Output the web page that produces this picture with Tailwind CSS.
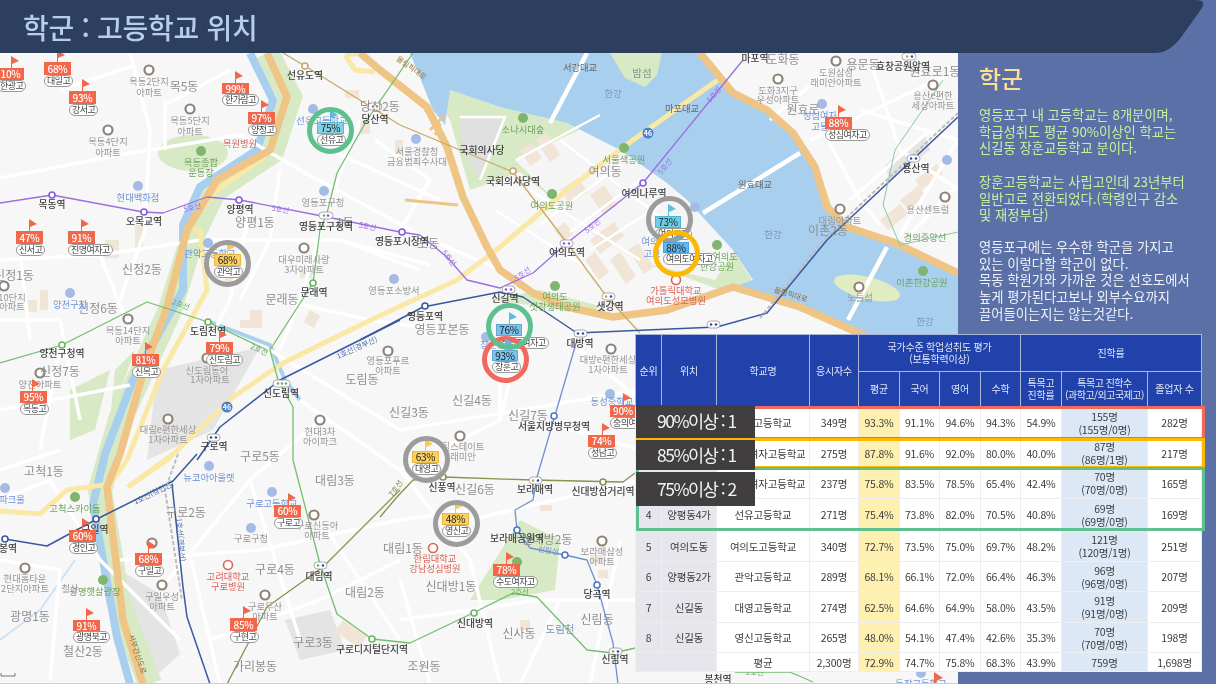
<!doctype html>
<html lang="ko">
<head>
<meta charset="utf-8">
<title>학군 : 고등학교 위치</title>
<script src="https://cdn.jsdelivr.net/npm/@tailwindcss/browser@4"></script>
</head>
<body class="m-0 overflow-hidden">
<div class="relative w-[1216px] h-[684px] overflow-hidden bg-[#5b70a6] font-['Noto_Sans_CJK_KR','Noto_Sans',sans-serif] blur-[0.35px]">

  <!-- title bar -->
  <header class="relative z-10 h-[53px] flex items-center pl-[23px]">
    <svg class="absolute left-0 top-0 w-[1216px] h-[53px]" viewBox="0 0 1216 53"><path d="M0 0H1195Q1207 0 1202 8L1182 36Q1170 53 1155 53H0Z" fill="#2d3f5f"/></svg>
    <h1 class="relative text-[28px] leading-[34px] font-medium tracking-[-0.3px] text-[#b7cde8] whitespace-nowrap">학군 : 고등학교 위치</h1>
  </header>

  <div class="flex h-[631px]">
    <!-- map -->
    <div class="relative w-[958px] h-[631px] shrink-0 overflow-hidden bg-[#f7f7f7]">
      <svg class="block w-[958px] h-[631px]" viewBox="0 53 958 631">
        <!-- land tones -->
        <g fill="#e4e4e4">
          <path d="M157 370L260 347L213 430L147 460Z"/>
          <path d="M115 567L160 594L180 654L147 684L130 640Z"/>
          <path d="M285 620L330 610L345 650L300 660Z"/>
          <path d="M885 165L925 135L930 150L890 180Z"/>
        </g>
        <g fill="#f1e5d8">
          <path d="M225 275h14v10h-14zM250 310h12v18h-12zM27 300h10v12h-10zM40 290h8v20h-8zM310 310l10 6-6 12-10-6zM300 270h12v8h-12zM240 320h16v8h-16zM135 225h8v22h-8zM105 240h14v18h-14zM345 90h14v8h-14zM360 120h10v14h-10zM395 140h8v14h-8zM520 620h10v10h-10zM343 620l24 16-8 12-24-16zM880 220l20-16 8 10-20 16zM900 200l18-14 8 10-18 14zM915 180l22-16 6 10-22 16zM590 555h12v8h-12zM598 570h10v8h-10zM540 505h12v6h-12z"/>
        </g>
        <!-- parks -->
        <g fill="#d8e9c6">
          <ellipse cx="193" cy="153" rx="35" ry="18"/>
          <path d="M430 85L450 90L500 107L567 123L620 150L667 183L687 200L733 250L753 282L720 290L680 275L640 262L600 240L560 205L520 172L470 190L450 120Z"/>
          <path d="M490 300L540 290L600 306L590 315L530 305Z"/>
          <path d="M470 600L520 520L560 540L555 590L500 600Z"/>
          <path d="M115 370L135 350L110 420Z"/>
          <path d="M70 390L110 370L95 430L70 440Z"/>
          <path d="M815 160L835 215L850 235L900 250L958 280V305L905 290L850 255L825 225Z"/>
        </g>
        <path d="M267 53L290 97L272 152L215 190L193 235L170 310L120 420L100 490L118 600L150 684" fill="none" stroke="#d8e9c6" stroke-width="24"/>
        <!-- yeouido interior -->
        <path d="M515 160L600 120L680 190L735 250L715 280L640 262L600 240L560 205Z" fill="#f5f5f5"/>
        <path d="M460 117H505L500 140L480 180L462 150Z" fill="#e0e0e0"/>
        <path fill="#f1e5d8" d="M520 150l12-8 10 16-12 8zM536 140l10-7 14 22-10 7zM560 190l18-12 10 14-18 12zM590 195l14-10 14 20-14 10zM555 230l10-8 8 12-10 8zM590 240l24-18 10 14-24 18zM585 260l10-8 14 20-10 8zM610 260l10-8 16 24-10 8zM628 250l10-7 16 24-10 7z"/>
        <!-- rivers -->
        <path d="M410 53L433 110L445 125L450 90L500 107L567 123L620 150L667 183L687 200L733 250L753 280L733 287L800 307L870 338L958 345V273L893 242L847 227L827 207L815 167L793 133L767 110L733 93L700 53Z" fill="#a9cfee"/>
        <path d="M610 53H662L657 75L645 87L625 78Z" fill="#d8e9c6"/>
        <ellipse cx="867" cy="288" rx="34" ry="11" transform="rotate(14 867 288)" fill="#e2ecc2"/>
        <path d="M250 53L273 100L257 150L200 187L183 225L183 290L133 380L105 454L93 504L117 637L130 684" fill="none" stroke="#a9cfee" stroke-width="8"/>
        <path d="M210 322L270 345L285 380L300 400" fill="none" stroke="#a9cfee" stroke-width="4"/>
        <path d="M75 560L40 610L0 640" fill="none" stroke="#cde3f5" stroke-width="2"/>
        <!-- white streets -->
        <g fill="none" stroke="#ffffff" stroke-width="3.5">
          <path d="M0 178L120 155L240 135L300 170L420 235L500 270"/>
          <path d="M130 53L150 130L145 230L120 300"/>
          <path d="M165 100L165 150M165 105L230 70M60 90L135 65"/>
          <path d="M360 120L330 200L300 300L280 350M250 210L230 300L210 340"/>
          <path d="M0 260L100 255L200 240M100 255L130 330M210 240L340 240L430 265"/>
          <path d="M340 240L420 270M280 300L370 320L440 330M330 150L440 200"/>
          <path d="M280 170L270 240L240 300M375 140L430 180L400 230"/>
          <path d="M300 400L400 470L470 560L500 684M270 350L400 430L640 390"/>
          <path d="M400 470L500 420L500 340M0 410L130 385M60 345L40 450"/>
          <path d="M0 500L50 480L100 560L180 640M120 560L260 550L400 520M160 590L250 480L320 420"/>
          <path d="M190 555L220 684M250 480L300 640M320 520L400 640M210 640L320 600L400 560"/>
          <path d="M400 580L430 684M400 620L540 600L640 600M470 520L640 480M400 520L470 510"/>
          <path d="M540 420L640 450M500 420L520 340M580 350L640 400M560 600L520 684M620 540L590 684"/>
          <path d="M770 120L840 60M810 140L958 70M820 125L860 200L880 225M860 110L958 140M870 60L900 150L958 190M900 235L958 140M850 200L930 130"/>
          <path d="M905 240L958 185"/>
          <path d="M0 320L60 320L80 420M20 250L30 340M60 450L0 470M0 560L60 570L50 680"/>
        </g>
        <g fill="none" stroke="#ffffff" stroke-width="2.5">
          <path d="M516 160L600 115M530 190L640 260M560 140L690 240M495 210L590 270M620 165L540 225M660 205L590 250M640 180L570 232M460 117H505L480 180"/>
        </g>
        <path d="M587 53L550 123M800 153L703 213M887 247L848 320" fill="none" stroke="#ffffff" stroke-width="4.5"/>
        <!-- yellow roads -->
        <g fill="none" stroke="#f9e8a6" stroke-width="5" stroke-linejoin="round">
          <path d="M722 77L633 140L567 190L500 247L457 280L377 317L283 363L233 397L167 460L128 487"/>
          <path d="M128 487L173 454"/>
          <path d="M265 157L217 190L187 227L200 230L207 290L163 370L127 460L110 484L67 490L40 514L0 511"/>
          <path d="M345 55L355 70L375 72M345 55L362 53"/>
        </g>
        <!-- highways -->
        <g fill="none" stroke="#efc586" stroke-width="7.5" stroke-linejoin="round">
          <path d="M267 53L287 97L270 150L217 180L187 230L167 307L143 373L120 454L107 487L113 537L123 620L143 684"/>
          <path d="M360 53L380 70L427 107L447 147L463 197L487 247L500 270L533 293L567 307L613 317L667 310L733 287L800 307L870 338"/>
          <path d="M700 53L733 93L767 110L793 133L815 167L827 207L847 227L893 242L958 273"/>
          <path d="M405 200L458 205" stroke-width="3"/>
        </g>
        <path d="M425 110L440 125L435 135M445 115L430 130" fill="none" stroke="#efc586" stroke-width="3"/>
        <!-- subway lines -->
        <g fill="none" stroke-width="1.3" stroke-linejoin="round">
          <path d="M0 203L52 195L143 212L163 213L207 197L240 200L327 217L400 232L420 235L447 257L467 280L500 288L533 273L567 243L643 183L743 60" stroke="#9b6fe0"/>
          <path d="M413 53L367 120L337 173L327 213L320 230L313 283L270 350L278 380L293 407L293 460L320 564L337 614L372 639L410 643L473 613L513 593L537 597L587 650L613 653L640 647" stroke="#74bf6f"/>
          <path d="M0 363L62 345L147 302L208 322L267 350" stroke="#74bf6f"/>
          <path d="M735 672H790L813 682" stroke="#74bf6f"/>
          <path d="M400 490L323 567L267 607L227 684" stroke="#8f8f50"/>
          <path d="M380 517L397 497L413 480L443 477L533 480L623 482L635 473" stroke="#8f8f50"/>
          <path d="M577 340L537 477L533 500L515 510L517 530L530 548L565 555L587 560L597 585L613 643L618 684" stroke="#6f90d2"/>
          <path d="M283 53L305 66L400 125L513 172L567 243L607 297L640 333" stroke="#c9a965"/>
        </g>
        <g fill="none" stroke-linejoin="round">
          <path d="M360 340L423 307L500 292L523 297L577 333L717 327L767 313L827 240L958 117" stroke="#39589f" stroke-width="1.5"/>
          <path d="M197 460L220 427L280 380L400 320M197 454L173 481L97 519L47 546L5 539M172 484L183 587L187 617L210 684" stroke="#39589f" stroke-width="1.5"/>
          <path d="M760 318L827 236L958 113M178 454L165 490L182 600" stroke="#bdbdbd" stroke-width="2" stroke-dasharray="4 2"/>
          <path d="M943 80L895 150L883 205L900 245L958 232" stroke="#8fc7a5" stroke-width="1"/>
        </g>
        <!-- station markers -->
        <g fill="#ffffff" stroke-width="1.6">
          <g stroke="#8a5be0"><circle cx="52" cy="195" r="3"/><circle cx="144" cy="212" r="3"/><circle cx="239" cy="200" r="3"/><circle cx="402" cy="232" r="3"/><circle cx="643" cy="183" r="3"/></g>
          <g stroke="#68b564"><circle cx="313" cy="283" r="3"/><circle cx="62" cy="345" r="3"/><circle cx="208" cy="322" r="3"/><circle cx="372" cy="639" r="3"/><circle cx="474" cy="613" r="3"/></g>
          <g stroke="#c9a965"><circle cx="305" cy="66" r="3"/><circle cx="513" cy="171" r="3"/></g>
          <g stroke="#8f8f50"><circle cx="443" cy="477" r="3"/><circle cx="603" cy="482" r="3"/></g>
          <g stroke="#39589f"><circle cx="425" cy="306" r="3"/><circle cx="96" cy="519" r="3"/><circle cx="5" cy="539" r="3"/></g>
          <g stroke="#4f78c8"><circle cx="554" cy="416" r="3"/><circle cx="517" cy="530" r="3"/><circle cx="565" cy="555" r="3"/><circle cx="597" cy="585" r="3"/></g>
        </g>
        <g fill="#ffffff" stroke="#888" stroke-width="0.7">
          <rect x="368" y="103" width="14" height="7" rx="3.5"/><rect x="319" y="212" width="14" height="7" rx="3.5"/>
          <rect x="560" y="240" width="13" height="7" rx="3.5"/><rect x="502" y="286" width="13" height="7" rx="3.5"/><rect x="602" y="293" width="13" height="7" rx="3.5"/>
          <rect x="574" y="330" width="13" height="7" rx="3.5"/><rect x="707" y="321" width="13" height="7" rx="3.5"/><rect x="273" y="380" width="17" height="7" rx="3.5"/>
          <rect x="207" y="434" width="13" height="7" rx="3.5"/><rect x="314" y="562" width="13" height="7" rx="3.5"/><rect x="529" y="477" width="13" height="7" rx="3.5"/>
          <rect x="609" y="648" width="13" height="7" rx="3.5"/><rect x="902" y="53" width="14" height="7" rx="3.5"/><rect x="907" y="155" width="13" height="7" rx="3.5"/>
        </g>
        <g fill="#68b564"><circle cx="373" cy="106.500" r="1.300"/><circle cx="324" cy="215.500" r="1.300"/><circle cx="278" cy="383.500" r="1.300"/><circle cx="282" cy="383.500" r="1.300"/><circle cx="286" cy="383.500" r="1.300"/><circle cx="318" cy="565.500" r="1.300"/><circle cx="613" cy="651.500" r="1.300"/></g>
        <g fill="#c9a23c"><circle cx="377" cy="106.500" r="1.300"/><circle cx="564" cy="0" r="0"/><circle cx="606" cy="296.500" r="1.300"/><circle cx="907" cy="56.500" r="1.300"/><circle cx="533" cy="480.500" r="1.300"/></g>
        <g fill="#8a5be0"><circle cx="328" cy="215.500" r="1.300"/><circle cx="564" cy="243.500" r="1.300"/><circle cx="569" cy="243.500" r="1.300"/><circle cx="506" cy="289.500" r="1.300"/><circle cx="511" cy="289.500" r="1.300"/></g>
        <g fill="#2f4fa0"><circle cx="611" cy="296.500" r="1.300"/><circle cx="578" cy="333.500" r="1.300"/><circle cx="583" cy="333.500" r="1.300"/><circle cx="711" cy="324.500" r="1.300"/><circle cx="716" cy="324.500" r="1.300"/><circle cx="211" cy="437.500" r="1.300"/><circle cx="216" cy="437.500" r="1.300"/><circle cx="911" cy="158.500" r="1.300"/><circle cx="916" cy="158.500" r="1.300"/><circle cx="538" cy="480.500" r="1.300"/><circle cx="618" cy="651.500" r="1.300"/><circle cx="323" cy="565.500" r="1.300"/><circle cx="912" cy="56.500" r="1.300"/></g>
        <!-- poi icons -->
        <g fill="#ffffff" stroke="#8f8378" stroke-width="2.2">
          <circle cx="149" cy="70" r="4.500"/><circle cx="190" cy="109" r="4.500"/><circle cx="108" cy="130" r="4.500"/><circle cx="304" cy="248" r="4.500"/><circle cx="128" cy="319" r="4.500"/>
          <circle cx="40" cy="373" r="4.500"/><circle cx="207" cy="358" r="4.500"/><circle cx="168" cy="419" r="4.500"/><circle cx="320" cy="420" r="4.500"/><circle cx="388" cy="351" r="4.500"/>
          <circle cx="778" cy="79" r="4.500"/><circle cx="836" cy="61" r="4.500"/><circle cx="933" cy="85" r="4.500"/><circle cx="840" cy="209" r="4.500"/><circle cx="945" cy="197" r="4.500"/>
          <circle cx="25" cy="568" r="4.500"/><circle cx="162" cy="585" r="4.500"/><circle cx="265" cy="595" r="4.500"/><circle cx="314" cy="515" r="4.500"/><circle cx="152" cy="543" r="4.500"/>
          <circle cx="460" cy="436" r="4.500"/><circle cx="602" cy="541" r="4.500"/><circle cx="611" cy="349" r="4.500"/><circle cx="859" cy="287" r="4.500"/><circle cx="4" cy="286" r="4.500"/>
        </g>
        <g fill="#a3bbe6">
          <circle cx="138" cy="186" r="5"/><circle cx="313" cy="109" r="5"/><circle cx="324" cy="191" r="5"/><circle cx="70" cy="293" r="5"/><circle cx="416" cy="139" r="5"/><circle cx="394" cy="279" r="5"/>
          <circle cx="209" cy="466" r="5"/><circle cx="272" cy="492" r="5"/><circle cx="251" cy="528" r="5"/><circle cx="5" cy="488" r="5"/><circle cx="208" cy="243" r="5"/>
          <circle cx="610" cy="394" r="5"/><circle cx="695" cy="207" r="5"/><circle cx="822" cy="104" r="5"/><circle cx="947" cy="160" r="5"/><circle cx="486" cy="337" r="5"/><circle cx="921" cy="673" r="5"/>
        </g>
        <g fill="#7fb56e">
          <circle cx="201" cy="151" r="5"/><circle cx="523" cy="118" r="5"/><circle cx="624" cy="148" r="5"/><circle cx="552" cy="194" r="5"/><circle cx="555" cy="286" r="5"/><circle cx="717" cy="245" r="5"/><circle cx="923" cy="271" r="5"/>
          <circle cx="75" cy="497" r="5"/><circle cx="103" cy="580" r="5"/><circle cx="517" cy="562" r="5"/>
        </g>
        <g fill="#ffffff" stroke="#d9645a" stroke-width="1.6"><circle cx="676" cy="280" r="4.500"/><circle cx="228" cy="565" r="4.500"/><circle cx="433" cy="548" r="4.500"/></g>
        <circle cx="648" cy="133" r="5.500" fill="#4f7ec8"/>
        <circle cx="227" cy="407" r="5.500" fill="#4f7ec8"/>
        <text x="648" y="136" font-size="7" fill="#fff" text-anchor="middle" font-weight="700">46</text>
        <text x="227" y="410" font-size="7" fill="#fff" text-anchor="middle" font-weight="700">46</text>

        <!-- district names -->
        <g fill="#8f8f8f" font-size="12" text-anchor="middle">
          <text x="184" y="91">목5동</text><text x="380" y="111">당산2동</text><text x="605" y="176">여의동</text><text x="255" y="227">양평1동</text><text x="142" y="274">신정2동</text><text x="14" y="280">신정1동</text>
          <text x="98" y="313">신정6동</text><text x="60" y="376">신정7동</text><text x="282" y="304">문래동</text><text x="362" y="384">도림동</text><text x="260" y="461">구로5동</text><text x="44" y="476">고척1동</text>
          <text x="186" y="517">구로2동</text><text x="335" y="485">대림3동</text><text x="275" y="574">구로4동</text><text x="365" y="597">대림2동</text><text x="313" y="647">구로3동</text><text x="30" y="621">광명1동</text>
          <text x="83" y="656">철산2동</text><text x="255" y="671">가리봉동</text><text x="409" y="417">신길3동</text><text x="472" y="405">신길4동</text><text x="528" y="420">신길7동</text><text x="475" y="494">신길6동</text>
          <text x="451" y="591">신대방1동</text><text x="547" y="544">신대방2동</text><text x="403" y="553">대림1동</text><text x="519" y="638">신사동</text><text x="424" y="671">조원동</text><text x="597" y="624">신림동</text>
          <text x="442" y="334">영등포본동</text><text x="783" y="64">도화동</text><text x="803" y="114">원효로</text><text x="863" y="69">용문동</text><text x="935" y="76">원효로1동</text><text x="828" y="235">이촌2동</text>
          <text x="345" y="227">1동</text><text x="428" y="248">포동</text>
        </g>
        <g fill="#7d93c4" font-size="9.5" text-anchor="middle">
          <text x="613" y="97">한강</text><text x="773" y="238">한강</text><text x="925" y="325">한강</text><text x="560" y="633" font-size="10.5">도림천</text><text x="642" y="77" fill="#7d9a8a" font-size="10.5">밤섬</text>
        </g>
        <!-- station names -->
        <g fill="#3e3e3e" font-size="9.8" font-weight="500" text-anchor="middle">
          <text x="305" y="79">선유도역</text><text x="375" y="123">당산역</text><text x="52" y="208">목동역</text><text x="144" y="225">오목교역</text><text x="240" y="213">양평역</text><text x="326" y="230">영등포구청역</text>
          <text x="482" y="154">국회의사당</text><text x="513" y="185">국회의사당역</text><text x="644" y="197">여의나루역</text><text x="567" y="256">여의도역</text><text x="402" y="245">영등포시장역</text><text x="755" y="62">마포역</text>
          <text x="903" y="70">효창공원앞역</text><text x="916" y="172">용산역</text><text x="505" y="302">신길역</text><text x="425" y="320">영등포역</text><text x="610" y="310">샛강역</text><text x="580" y="347">대방역</text>
          <text x="314" y="296">문래역</text><text x="62" y="357">양천구청역</text><text x="208" y="335">도림천역</text><text x="281" y="397">신도림역</text><text x="214" y="450">구로역</text><text x="95" y="533">구일역</text>
          <text x="8" y="552">봉역</text><text x="319" y="580">대림역</text><text x="372" y="653">구로디지털단지역</text><text x="442" y="491">신풍역</text><text x="535" y="493">보라매역</text><text x="603" y="495">신대방삼거리역</text>
          <text x="554" y="430">서울지방병무청역</text><text x="517" y="542">보라매공원역</text><text x="597" y="598">당곡역</text><text x="475" y="627">신대방역</text><text x="615" y="663">신림역</text><text x="718" y="683">봉천역</text>
        </g>
        <!-- poi names -->
        <g fill="#979797" font-size="9.3" text-anchor="middle">
          <text x="149" y="85">목동2단지</text><text x="149" y="96">아파트</text><text x="190" y="124">목동5단지</text><text x="190" y="135">아파트</text><text x="108" y="145">목동4단지</text><text x="108" y="156">아파트</text>
          <text x="323" y="206">영등포구청</text><text x="417" y="155">서울경찰청</text><text x="417" y="165">금융범죄수사대</text><text x="304" y="263">대우미래사랑</text><text x="304" y="273">3차아파트</text><text x="394" y="294">영등포소방서</text>
          <text x="778" y="94">도화3지구</text><text x="778" y="103">우성아파트</text><text x="836" y="76">도원삼성</text><text x="836" y="86">래미안아파트</text><text x="933" y="99">용산e편한</text><text x="933" y="109">세상아파트</text>
          <text x="840" y="224">대림아파트</text><text x="860" y="301">노들섬</text><text x="928" y="213">용산센트럴</text>
          <text x="128" y="334">목동14단지</text><text x="128" y="344">아파트</text><text x="168" y="433">대림e편한세상</text><text x="168" y="443">1차아파트</text><text x="320" y="435">현대3차</text><text x="320" y="445">아이파크</text>
          <text x="207" y="374">신도림동아</text><text x="210" y="383">1차아파트</text><text x="388" y="364">영등포푸르</text><text x="388" y="374">아파트</text><text x="12" y="301">10단지</text><text x="12" y="310">아파트</text><text x="40" y="388">양천아파트</text>
          <text x="265" y="610">구로두산</text><text x="265" y="620">아파트</text><text x="162" y="600">구일우성</text><text x="162" y="610">아파트</text><text x="25" y="582">현대홈타운</text><text x="25" y="592">2단지아파트</text>
          <text x="317" y="529">구로신동아</text><text x="317" y="539">아파트</text><text x="463" y="450">힐스테이트</text><text x="463" y="460">래미안</text><text x="602" y="555">보라매삼성</text><text x="602" y="565">아파트</text>
          <text x="608" y="363">대방e편한세상</text><text x="608" y="373">1차아파트</text><text x="251" y="542">구로구청</text>
        </g>
        <g fill="#6f92d6" font-size="9.3" text-anchor="middle">
          <text x="138" y="201">현대백화점</text><text x="70" y="308">양천구청</text><text x="210" y="257">관악고등학교</text><text x="322" y="124">선유고등학교</text><text x="209" y="481">뉴코아아울렛</text><text x="272" y="507">구로고등학교</text><text x="12" y="503">파크몰</text>
          <text x="493" y="348">장훈고</text><text x="612" y="405">동성중학교</text><text x="622" y="418">고등</text><text x="650" y="245">여의</text><text x="652" y="257">고교</text><text x="820" y="119">성심여자</text><text x="820" y="130">고등</text><text x="921" y="687">동작고등학교</text>
        </g>
        <g fill="#6ea35c" font-size="9.3" text-anchor="middle">
          <text x="201" y="166">목동종합</text><text x="201" y="176">운동장</text><text x="523" y="133">소나시대숲</text><text x="624" y="163">서울색공원</text><text x="552" y="209">여의도공원</text><text x="555" y="300">여의도</text><text x="555" y="310">샛강생태공원</text>
          <text x="717" y="270">한강공원</text><text x="725" y="260">여의도</text><text x="922" y="286">이촌한강공원</text><text x="925" y="241">경의중앙선</text><text x="75" y="512">고척스카이돔</text><text x="95" y="595">광명햇살광장</text><text x="70" y="592" fill="#979797">철산</text>
        </g>
        <g fill="#d9645a" font-size="9.3" text-anchor="middle">
          <text x="676" y="294">가톨릭대학교</text><text x="676" y="304">여의도성모병원</text><text x="228" y="580">고려대학교</text><text x="228" y="590">구로병원</text><text x="435" y="562">한림대학교</text><text x="435" y="572">강남성심병원</text>
          <text x="240" y="147">목원병원</text>
        </g>
        <g fill="#666" font-size="9.3" text-anchor="middle">
          <text x="580" y="71">서강대교</text><text x="682" y="112">마포대교</text><text x="755" y="188">원효대교</text>
        </g>
        <g font-size="7.5" text-anchor="middle" fill="#9b6fe0">
          <text x="193" y="210" transform="rotate(-15 193 210)">5호선</text><text x="280" y="212" transform="rotate(10 280 212)">5호선</text><text x="367" y="229" transform="rotate(12 367 229)">5호선</text><text x="447" y="260" transform="rotate(50 447 260)">5호선</text>
          <text x="524" y="276" transform="rotate(-35 524 276)">5호선</text><text x="594" y="228" transform="rotate(-38 594 228)">5호선</text><text x="667" y="168" transform="rotate(-50 667 168)">5호선</text><text x="716" y="96" transform="rotate(-50 716 96)">5호선</text>
        </g>
        <g font-size="7.5" text-anchor="middle" fill="#64ad62">
          <text x="180" y="307" transform="rotate(20 180 307)">2호선</text><text x="258" y="352" transform="rotate(25 258 352)">2호선</text><text x="520" y="595">2호선</text><text x="755" y="675">2호선</text>
        </g>
        <g font-size="7.5" text-anchor="middle" fill="#4f6aa8">
          <text x="358" y="350" transform="rotate(-24 358 350)">1호선(경부선)</text><text x="155" y="495" transform="rotate(-26 155 495)">1호선(경인선)</text><text x="178" y="540" transform="rotate(85 178 540)">1호선(경부선)</text>
          <text x="548" y="553" transform="rotate(10 548 553)" fill="#6f90d2">신림선</text>
        </g>
        <g font-size="7.5" text-anchor="middle" fill="#8a6d3b">
          <text x="135" y="655" transform="rotate(72 135 655)">서부간선도로</text><text x="410" y="70" transform="rotate(35 410 70)" fill="#9c7a3f">올림픽대로</text><text x="790" y="297" transform="rotate(17 790 297)">올림픽대로</text><text x="398" y="490" transform="rotate(-55 398 490)" fill="#7e7e40">7호선</text>
        </g>
        <!-- scale bar, lone flag, bottom edge -->
        <path d="M1 673V676H15V673" fill="none" stroke="#555" stroke-width="0.8"/>
        <path d="M934 672L943 678L936 681V684H934Z" fill="#f2674a"/>
        <rect x="0" y="683" width="958" height="1" fill="#c5d5cc"/>
      </svg>

      <!-- markers layer: coordinates of the whole slide -->
      <div class="absolute left-0 top-[-53px] w-[958px] h-[684px]">
        <!-- red flag markers -->
        <div class="absolute left-[-3px] top-[56px] flex flex-col items-start"><svg class="ml-[13px] w-[9px] h-[12px]" viewBox="0 0 9 12"><path d="M1 0L9 5L2 8V12H1Z" fill="#f2674a"/></svg><div class="w-[27px] h-[12px] bg-[#f2674a] text-white text-[10px] leading-[12px] text-center font-medium tracking-[-0.3px]">10%</div><div class="h-[12px] px-[2px] rounded-full bg-white border border-[#999] text-[9px] leading-[10px] tracking-[-0.5px] whitespace-nowrap text-[#444]">한광고</div></div>
        <div class="absolute left-[44px] top-[50px] flex flex-col items-start"><svg class="ml-[12px] w-[9px] h-[12px]" viewBox="0 0 9 12"><path d="M1 0L9 5L2 8V12H1Z" fill="#f2674a"/></svg><div class="w-[27px] h-[13px] bg-[#f2674a] text-white text-[10px] leading-[13px] text-center font-medium tracking-[-0.3px]">68%</div><div class="h-[12px] px-[2px] rounded-full bg-white border border-[#999] text-[9px] leading-[10px] tracking-[-0.5px] whitespace-nowrap text-[#444]">대일고</div></div>
        <div class="absolute left-[69px] top-[79px] flex flex-col items-start"><svg class="ml-[12px] w-[9px] h-[12px]" viewBox="0 0 9 12"><path d="M1 0L9 5L2 8V12H1Z" fill="#f2674a"/></svg><div class="w-[27px] h-[13px] bg-[#f2674a] text-white text-[10px] leading-[13px] text-center font-medium tracking-[-0.3px]">93%</div><div class="h-[12px] px-[2px] rounded-full bg-white border border-[#999] text-[9px] leading-[10px] tracking-[-0.5px] whitespace-nowrap text-[#444]">강서고</div></div>
        <div class="absolute left-[222px] top-[71px] flex flex-col items-start"><svg class="ml-[12px] w-[9px] h-[12px]" viewBox="0 0 9 12"><path d="M1 0L9 5L2 8V12H1Z" fill="#f2674a"/></svg><div class="w-[27px] h-[11px] bg-[#f2674a] text-white text-[10px] leading-[11px] text-center font-medium tracking-[-0.3px]">99%</div><div class="h-[12px] px-[2px] rounded-full bg-white border border-[#999] text-[9px] leading-[10px] tracking-[-0.5px] whitespace-nowrap text-[#444]">한가람고</div></div>
        <div class="absolute left-[248px] top-[100px] flex flex-col items-start"><svg class="ml-[12px] w-[9px] h-[12px]" viewBox="0 0 9 12"><path d="M1 0L9 5L2 8V12H1Z" fill="#f2674a"/></svg><div class="w-[27px] h-[12px] bg-[#f2674a] text-white text-[10px] leading-[12px] text-center font-medium tracking-[-0.3px]">97%</div><div class="h-[12px] px-[2px] rounded-full bg-white border border-[#999] text-[9px] leading-[10px] tracking-[-0.5px] whitespace-nowrap text-[#444]">양정고</div></div>
        <div class="absolute left-[16px] top-[219px] flex flex-col items-start"><svg class="ml-[12px] w-[9px] h-[12px]" viewBox="0 0 9 12"><path d="M1 0L9 5L2 8V12H1Z" fill="#f2674a"/></svg><div class="w-[27px] h-[13px] bg-[#f2674a] text-white text-[10px] leading-[13px] text-center font-medium tracking-[-0.3px]">47%</div><div class="h-[12px] px-[2px] rounded-full bg-white border border-[#999] text-[9px] leading-[10px] tracking-[-0.5px] whitespace-nowrap text-[#444]">신서고</div></div>
        <div class="absolute left-[68px] top-[219px] flex flex-col items-start"><svg class="ml-[12px] w-[9px] h-[12px]" viewBox="0 0 9 12"><path d="M1 0L9 5L2 8V12H1Z" fill="#f2674a"/></svg><div class="w-[27px] h-[13px] bg-[#f2674a] text-white text-[10px] leading-[13px] text-center font-medium tracking-[-0.3px]">91%</div><div class="h-[12px] px-[2px] rounded-full bg-white border border-[#999] text-[9px] leading-[10px] tracking-[-0.5px] whitespace-nowrap text-[#444]">진명여자고</div></div>
        <div class="absolute left-[132px] top-[342px] flex flex-col items-start"><svg class="ml-[12px] w-[9px] h-[12px]" viewBox="0 0 9 12"><path d="M1 0L9 5L2 8V12H1Z" fill="#f2674a"/></svg><div class="w-[27px] h-[12px] bg-[#f2674a] text-white text-[10px] leading-[12px] text-center font-medium tracking-[-0.3px]">81%</div><div class="h-[12px] px-[2px] rounded-full bg-white border border-[#999] text-[9px] leading-[10px] tracking-[-0.5px] whitespace-nowrap text-[#444]">신목고</div></div>
        <div class="absolute left-[206px] top-[330px] flex flex-col items-start"><svg class="ml-[12px] w-[9px] h-[12px]" viewBox="0 0 9 12"><path d="M1 0L9 5L2 8V12H1Z" fill="#f2674a"/></svg><div class="w-[27px] h-[12px] bg-[#f2674a] text-white text-[10px] leading-[12px] text-center font-medium tracking-[-0.3px]">79%</div><div class="h-[12px] px-[2px] rounded-full bg-white border border-[#999] text-[9px] leading-[10px] tracking-[-0.5px] whitespace-nowrap text-[#444]">신도림고</div></div>
        <div class="absolute left-[20px] top-[379px] flex flex-col items-start"><svg class="ml-[11px] w-[9px] h-[12px]" viewBox="0 0 9 12"><path d="M1 0L9 5L2 8V12H1Z" fill="#f2674a"/></svg><div class="w-[27px] h-[12px] bg-[#f2674a] text-white text-[10px] leading-[12px] text-center font-medium tracking-[-0.3px]">95%</div><div class="h-[12px] px-[2px] rounded-full bg-white border border-[#999] text-[9px] leading-[10px] tracking-[-0.5px] whitespace-nowrap text-[#444]">목동고</div></div>
        <div class="absolute left-[274px] top-[493px] flex flex-col items-start"><svg class="ml-[13px] w-[9px] h-[12px]" viewBox="0 0 9 12"><path d="M1 0L9 5L2 8V12H1Z" fill="#f2674a"/></svg><div class="w-[27px] h-[12px] bg-[#f2674a] text-white text-[10px] leading-[12px] text-center font-medium tracking-[-0.3px]">60%</div><div class="h-[12px] px-[2px] rounded-full bg-white border border-[#999] text-[9px] leading-[10px] tracking-[-0.5px] whitespace-nowrap text-[#444]">구로고</div></div>
        <div class="absolute left-[69px] top-[518px] flex flex-col items-start"><svg class="ml-[12px] w-[9px] h-[12px]" viewBox="0 0 9 12"><path d="M1 0L9 5L2 8V12H1Z" fill="#f2674a"/></svg><div class="w-[27px] h-[12px] bg-[#f2674a] text-white text-[10px] leading-[12px] text-center font-medium tracking-[-0.3px]">60%</div><div class="h-[12px] px-[2px] rounded-full bg-white border border-[#999] text-[9px] leading-[10px] tracking-[-0.5px] whitespace-nowrap text-[#444]">경인고</div></div>
        <div class="absolute left-[135px] top-[541px] flex flex-col items-start"><svg class="ml-[12px] w-[9px] h-[12px]" viewBox="0 0 9 12"><path d="M1 0L9 5L2 8V12H1Z" fill="#f2674a"/></svg><div class="w-[27px] h-[12px] bg-[#f2674a] text-white text-[10px] leading-[12px] text-center font-medium tracking-[-0.3px]">68%</div><div class="h-[12px] px-[2px] rounded-full bg-white border border-[#999] text-[9px] leading-[10px] tracking-[-0.5px] whitespace-nowrap text-[#444]">구일고</div></div>
        <div class="absolute left-[73px] top-[608px] flex flex-col items-start"><svg class="ml-[12px] w-[9px] h-[12px]" viewBox="0 0 9 12"><path d="M1 0L9 5L2 8V12H1Z" fill="#f2674a"/></svg><div class="w-[27px] h-[11px] bg-[#f2674a] text-white text-[10px] leading-[11px] text-center font-medium tracking-[-0.3px]">91%</div><div class="h-[12px] px-[2px] rounded-full bg-white border border-[#999] text-[9px] leading-[10px] tracking-[-0.5px] whitespace-nowrap text-[#444]">광명북고</div></div>
        <div class="absolute left-[230px] top-[606px] flex flex-col items-start"><svg class="ml-[12px] w-[9px] h-[12px]" viewBox="0 0 9 12"><path d="M1 0L9 5L2 8V12H1Z" fill="#f2674a"/></svg><div class="w-[27px] h-[13px] bg-[#f2674a] text-white text-[10px] leading-[13px] text-center font-medium tracking-[-0.3px]">85%</div><div class="h-[12px] px-[2px] rounded-full bg-white border border-[#999] text-[9px] leading-[10px] tracking-[-0.5px] whitespace-nowrap text-[#444]">구현고</div></div>
        <div class="absolute left-[610px] top-[393px] flex flex-col items-start"><svg class="ml-[12px] w-[9px] h-[12px]" viewBox="0 0 9 12"><path d="M1 0L9 5L2 8V12H1Z" fill="#f2674a"/></svg><div class="w-[26px] h-[12px] bg-[#f2674a] text-white text-[10px] leading-[12px] text-center font-medium tracking-[-0.3px]">90%</div><div class="h-[12px] px-[2px] rounded-full bg-white border border-[#999] text-[9px] leading-[10px] tracking-[-0.5px] whitespace-nowrap text-[#444]">숭의여고</div></div>
        <div class="absolute left-[588px] top-[423px] flex flex-col items-start"><svg class="ml-[13px] w-[9px] h-[12px]" viewBox="0 0 9 12"><path d="M1 0L9 5L2 8V12H1Z" fill="#f2674a"/></svg><div class="w-[27px] h-[12px] bg-[#f2674a] text-white text-[10px] leading-[12px] text-center font-medium tracking-[-0.3px]">74%</div><div class="h-[12px] px-[2px] rounded-full bg-white border border-[#999] text-[9px] leading-[10px] tracking-[-0.5px] whitespace-nowrap text-[#444]">성남고</div></div>
        <div class="absolute left-[493px] top-[552px] flex flex-col items-start"><svg class="ml-[12px] w-[9px] h-[12px]" viewBox="0 0 9 12"><path d="M1 0L9 5L2 8V12H1Z" fill="#f2674a"/></svg><div class="w-[27px] h-[12px] bg-[#f2674a] text-white text-[10px] leading-[12px] text-center font-medium tracking-[-0.3px]">78%</div><div class="h-[12px] px-[2px] rounded-full bg-white border border-[#999] text-[9px] leading-[10px] tracking-[-0.5px] whitespace-nowrap text-[#444]">수도여자고</div></div>
        <div class="absolute left-[825px] top-[105px] flex flex-col items-start"><svg class="ml-[12px] w-[9px] h-[12px]" viewBox="0 0 9 12"><path d="M1 0L9 5L2 8V12H1Z" fill="#f2674a"/></svg><div class="w-[27px] h-[12px] bg-[#f2674a] text-white text-[10px] leading-[12px] text-center font-medium tracking-[-0.3px]">88%</div><div class="h-[12px] px-[2px] rounded-full bg-white border border-[#999] text-[9px] leading-[10px] tracking-[-0.5px] whitespace-nowrap text-[#444]">성심여자고</div></div>

        <!-- ringed: yellow -->
        <div class="absolute left-[214px] top-[242px] flex flex-col items-start"><svg class="ml-[12px] w-[9px] h-[12px]" viewBox="0 0 9 12"><path d="M1 0L9 5L2 8V12H1Z" fill="#f9c94f"/></svg><div class="w-[27px] h-[12px] bg-[#fbd060] border border-[#e8b840] text-[#222] text-[10px] leading-[10px] tracking-[-0.3px] text-center">68%</div><div class="h-[12px] px-[2px] rounded-full bg-white border border-[#999] text-[9px] leading-[10px] tracking-[-0.5px] whitespace-nowrap text-[#444]">관악고</div></div>
        <div class="absolute left-[204px] top-[240px] w-[47px] h-[47px] rounded-full border-[5px] border-[#9c9c9c]"></div>
        <div class="absolute left-[412px] top-[439px] flex flex-col items-start"><svg class="ml-[12px] w-[9px] h-[12px]" viewBox="0 0 9 12"><path d="M1 0L9 5L2 8V12H1Z" fill="#f9c94f"/></svg><div class="w-[27px] h-[12px] bg-[#fbd060] border border-[#e8b840] text-[#222] text-[10px] leading-[10px] tracking-[-0.3px] text-center">63%</div><div class="h-[12px] px-[2px] rounded-full bg-white border border-[#999] text-[9px] leading-[10px] tracking-[-0.5px] whitespace-nowrap text-[#444]">대영고</div></div>
        <div class="absolute left-[403px] top-[436px] w-[47px] h-[47px] rounded-full border-[5px] border-[#9c9c9c]"></div>
        <div class="absolute left-[442px] top-[501px] flex flex-col items-start"><svg class="ml-[12px] w-[9px] h-[12px]" viewBox="0 0 9 12"><path d="M1 0L9 5L2 8V12H1Z" fill="#f9c94f"/></svg><div class="w-[27px] h-[12px] bg-[#fbd060] border border-[#e8b840] text-[#222] text-[10px] leading-[10px] tracking-[-0.3px] text-center">48%</div><div class="h-[12px] px-[2px] rounded-full bg-white border border-[#999] text-[9px] leading-[10px] tracking-[-0.5px] whitespace-nowrap text-[#444]">영신고</div></div>
        <div class="absolute left-[433px] top-[500px] w-[47px] h-[47px] rounded-full border-[5px] border-[#9c9c9c]"></div>

        <!-- ringed: blue -->
        <div class="absolute left-[317px] top-[110px] flex flex-col items-start"><svg class="ml-[12px] w-[9px] h-[12px]" viewBox="0 0 9 12"><path d="M1 0L9 5L2 8V12H1Z" fill="#5fb8e0"/></svg><div class="w-[27px] h-[12px] bg-[#80d2e2] border border-[#5fb8d8] text-[#222] text-[10px] leading-[10px] tracking-[-0.3px] text-center">75%</div><div class="h-[12px] px-[2px] rounded-full bg-white border border-[#999] text-[9px] leading-[10px] tracking-[-0.5px] whitespace-nowrap text-[#444]">선유고</div></div>
        <div class="absolute left-[307px] top-[107px] w-[47px] h-[47px] rounded-full border-[5px] border-[#5fc08f]"></div>

        <div class="absolute left-[655px] top-[204px] flex flex-col items-start"><svg class="ml-[12px] w-[9px] h-[12px]" viewBox="0 0 9 12"><path d="M1 0L9 5L2 8V12H1Z" fill="#5cc0d8"/></svg><div class="w-[26px] h-[12px] bg-[#6cd0e2] border border-[#4fb8d0] text-[#222] text-[10px] leading-[10px] tracking-[-0.3px] text-center">73%</div><div class="h-[12px] px-[2px] rounded-full bg-white border border-[#999] text-[9px] leading-[10px] tracking-[-0.5px] whitespace-nowrap text-[#444]">여의도고</div></div>
        <div class="absolute left-[646px] top-[196px] w-[47px] h-[47px] rounded-full border-[5px] border-[#9c9c9c]"></div>
        <div class="absolute left-[663px] top-[230px] flex flex-col items-start"><svg class="ml-[12px] w-[9px] h-[12px]" viewBox="0 0 9 12"><path d="M1 0L9 5L2 8V12H1Z" fill="#5cb0e8"/></svg><div class="w-[26px] h-[11px] bg-[#62b8ea] border border-[#4fa0d8] text-[#222] text-[10px] leading-[9px] tracking-[-0.3px] text-center">88%</div><div class="h-[12px] px-[2px] rounded-full bg-white border border-[#999] text-[9px] leading-[10px] tracking-[-0.5px] whitespace-nowrap text-[#444]">여의도여자고</div></div>
        <div class="absolute left-[653px] top-[230px] w-[47px] h-[47px] rounded-full border-[5px] border-[#fdb900]"></div>

        <div class="absolute left-[496px] top-[312px] flex flex-col items-start"><svg class="ml-[12px] w-[9px] h-[12px]" viewBox="0 0 9 12"><path d="M1 0L9 5L2 8V12H1Z" fill="#5fb8e8"/></svg><div class="w-[26px] h-[12px] bg-[#7cc2ea] border border-[#5fa8d8] text-[#222] text-[10px] leading-[10px] tracking-[-0.3px] text-center">76%</div><div class="h-[12px] mt-[1px] px-[2px] rounded-full bg-white border border-[#999] text-[9px] leading-[10px] tracking-[-0.5px] whitespace-nowrap text-[#444]">영등포여자고</div></div>
        <div class="absolute left-[482px] top-[336px] w-[47px] h-[47px] rounded-full border-[5px] border-[#f0695c]"></div>
        <div class="absolute left-[492px] top-[338px] flex flex-col items-start"><svg class="ml-[12px] w-[9px] h-[12px]" viewBox="0 0 9 12"><path d="M1 0L9 5L2 8V12H1Z" fill="#5fb8e8"/></svg><div class="w-[26px] h-[11px] bg-[#7cc2ea] border border-[#5fa8d8] text-[#222] text-[10px] leading-[9px] tracking-[-0.3px] text-center">93%</div><div class="h-[12px] px-[2px] rounded-full bg-white border border-[#999] text-[9px] leading-[10px] tracking-[-0.5px] whitespace-nowrap text-[#444]">장훈고</div></div>
        <div class="absolute left-[486px] top-[303px] w-[47px] h-[47px] rounded-full border-[5px] border-[#5fc08f]"></div>
      </div>
    </div>

    <!-- side text -->
    <aside class="pl-[21px] pt-[8px] text-[13.3px] leading-[16.7px] whitespace-nowrap">
      <h2 class="text-[24px] leading-[34px] font-medium text-[#ffdf8f] mb-[12px]">학군</h2>
      <p class="text-[#c9f09c]">영등포구 내 고등학교는 8개분이며,<br>학급성취도 평균 90%이상인 학교는<br>신길동 장훈교등학교 분이다.</p>
      <p class="mt-[16.7px] text-[#c9f09c]">장훈고등학교는 사립고인데 23년부터<br>일반고로 전환되었다.(학령인구 감소<br>및 재정부담)</p>
      <p class="mt-[15px] text-[#eef1fa]">영등포구에는 우수한 학군을 가지고<br>있는 이렇다할 학군이 없다.<br>목동 학원가와 가까운 것은 선호도에서<br>높게 평가된다고보나 외부수요까지<br>끌어들이는지는 않는것같다.</p>
    </aside>
  </div>

  <!-- table -->
  <table class="absolute z-20 left-[635px] top-[334px] w-[567px] h-[337px] table-fixed border-collapse bg-white text-[10.5px] leading-[13px] text-center text-[#3c3c3c] tracking-[-0.2px]">
    <colgroup>
      <col class="w-[26px]"><col class="w-[55px]"><col class="w-[93px]"><col class="w-[49px]"><col class="w-[41px]"><col class="w-[40px]"><col class="w-[41px]"><col class="w-[40px]"><col class="w-[41px]"><col class="w-[86px]"><col>
    </colgroup>
    <thead class="bg-[#2242ab] text-[#dfe6f5] text-[10px] leading-[12px]">
      <tr class="h-[37px]">
        <th rowspan="2" class="font-normal border border-[#a8b7da]">순위</th>
        <th rowspan="2" class="font-normal border border-[#a8b7da]">위치</th>
        <th rowspan="2" class="font-normal border border-[#a8b7da]">학교명</th>
        <th rowspan="2" class="font-normal border border-[#a8b7da]">응시자수</th>
        <th colspan="4" class="font-normal border border-[#a8b7da]">국가수준 학업성취도 평가<br>(보통학력이상)</th>
        <th colspan="3" class="font-normal border border-[#a8b7da]">진학률</th>
      </tr>
      <tr class="h-[35px]">
        <th class="font-normal border border-[#a8b7da]">평균</th>
        <th class="font-normal border border-[#a8b7da]">국어</th>
        <th class="font-normal border border-[#a8b7da]">영어</th>
        <th class="font-normal border border-[#a8b7da]">수학</th>
        <th class="font-normal border border-[#a8b7da]">특목고<br>진학률</th>
        <th class="font-normal border border-[#a8b7da] tracking-[-0.5px]">특목고 진학수<br>(과학고/외고국제고)</th>
        <th class="font-normal border border-[#a8b7da]">졸업자 수</th>
      </tr>
    </thead>
    <tbody>
      <tr class="h-[32px]"><td class="border border-[#eee] bg-[#e6e6ec]">1</td><td class="border border-[#eee] bg-[#e6e6ec]">신길동</td><td class="border border-[#eee]">장훈고등학교</td><td class="border border-[#eee]">349명</td><td class="border border-[#eee] bg-[#fdf0b0]">93.3%</td><td class="border border-[#eee]">91.1%</td><td class="border border-[#eee]">94.6%</td><td class="border border-[#eee]">94.3%</td><td class="border border-[#eee]">54.9%</td><td class="border border-[#eee] bg-[#dde8f6]">155명<br>(155명/0명)</td><td class="border border-[#eee]">282명</td></tr>
      <tr class="h-[29px]"><td class="border border-[#eee] bg-[#e6e6ec]">2</td><td class="border border-[#eee] bg-[#e6e6ec]">여의도동</td><td class="border border-[#eee]">여의도여자고등학교</td><td class="border border-[#eee]">275명</td><td class="border border-[#eee] bg-[#fdf0b0]">87.8%</td><td class="border border-[#eee]">91.6%</td><td class="border border-[#eee]">92.0%</td><td class="border border-[#eee]">80.0%</td><td class="border border-[#eee]">40.0%</td><td class="border border-[#eee] bg-[#dde8f6]">87명<br>(86명/1명)</td><td class="border border-[#eee]">217명</td></tr>
      <tr class="h-[31px]"><td class="border border-[#eee] bg-[#e6e6ec]">3</td><td class="border border-[#eee] bg-[#e6e6ec]">영등포동</td><td class="border border-[#eee]">영등포여자고등학교</td><td class="border border-[#eee]">237명</td><td class="border border-[#eee] bg-[#fdf0b0]">75.8%</td><td class="border border-[#eee]">83.5%</td><td class="border border-[#eee]">78.5%</td><td class="border border-[#eee]">65.4%</td><td class="border border-[#eee]">42.4%</td><td class="border border-[#eee] bg-[#dde8f6]">70명<br>(70명/0명)</td><td class="border border-[#eee]">165명</td></tr>
      <tr class="h-[32px]"><td class="border border-[#eee] bg-[#e6e6ec]">4</td><td class="border border-[#eee] bg-[#e6e6ec]">양평동4가</td><td class="border border-[#eee]">선유고등학교</td><td class="border border-[#eee]">271명</td><td class="border border-[#eee] bg-[#fdf0b0]">75.4%</td><td class="border border-[#eee]">73.8%</td><td class="border border-[#eee]">82.0%</td><td class="border border-[#eee]">70.5%</td><td class="border border-[#eee]">40.8%</td><td class="border border-[#eee] bg-[#dde8f6]">69명<br>(69명/0명)</td><td class="border border-[#eee]">169명</td></tr>
      <tr class="h-[31px]"><td class="border border-[#eee] bg-[#e6e6ec]">5</td><td class="border border-[#eee] bg-[#e6e6ec]">여의도동</td><td class="border border-[#eee]">여의도고등학교</td><td class="border border-[#eee]">340명</td><td class="border border-[#eee] bg-[#fdf0b0]">72.7%</td><td class="border border-[#eee]">73.5%</td><td class="border border-[#eee]">75.0%</td><td class="border border-[#eee]">69.7%</td><td class="border border-[#eee]">48.2%</td><td class="border border-[#eee] bg-[#dde8f6]">121명<br>(120명/1명)</td><td class="border border-[#eee]">251명</td></tr>
      <tr class="h-[30px]"><td class="border border-[#eee] bg-[#e6e6ec]">6</td><td class="border border-[#eee] bg-[#e6e6ec]">양평동2가</td><td class="border border-[#eee]">관악고등학교</td><td class="border border-[#eee]">289명</td><td class="border border-[#eee] bg-[#fdf0b0]">68.1%</td><td class="border border-[#eee]">66.1%</td><td class="border border-[#eee]">72.0%</td><td class="border border-[#eee]">66.4%</td><td class="border border-[#eee]">46.3%</td><td class="border border-[#eee] bg-[#dde8f6]">96명<br>(96명/0명)</td><td class="border border-[#eee]">207명</td></tr>
      <tr class="h-[31px]"><td class="border border-[#eee] bg-[#e6e6ec]">7</td><td class="border border-[#eee] bg-[#e6e6ec]">신길동</td><td class="border border-[#eee]">대영고등학교</td><td class="border border-[#eee]">274명</td><td class="border border-[#eee] bg-[#fdf0b0]">62.5%</td><td class="border border-[#eee]">64.6%</td><td class="border border-[#eee]">64.9%</td><td class="border border-[#eee]">58.0%</td><td class="border border-[#eee]">43.5%</td><td class="border border-[#eee] bg-[#dde8f6]">91명<br>(91명/0명)</td><td class="border border-[#eee]">209명</td></tr>
      <tr class="h-[30px]"><td class="border border-[#eee] bg-[#e6e6ec]">8</td><td class="border border-[#eee] bg-[#e6e6ec]">신길동</td><td class="border border-[#eee]">영신고등학교</td><td class="border border-[#eee]">265명</td><td class="border border-[#eee] bg-[#fdf0b0]">48.0%</td><td class="border border-[#eee]">54.1%</td><td class="border border-[#eee]">47.4%</td><td class="border border-[#eee]">42.6%</td><td class="border border-[#eee]">35.3%</td><td class="border border-[#eee] bg-[#dde8f6]">70명<br>(70명/0명)</td><td class="border border-[#eee]">198명</td></tr>
      <tr class="h-[19px]"><td colspan="2" class="border border-[#eee] bg-[#e6e6ec]"></td><td class="border border-[#eee]">평균</td><td class="border border-[#eee]">2,300명</td><td class="border border-[#eee] bg-[#fdf0b0]">72.9%</td><td class="border border-[#eee]">74.7%</td><td class="border border-[#eee]">75.8%</td><td class="border border-[#eee]">68.3%</td><td class="border border-[#eee]">43.9%</td><td class="border border-[#eee] bg-[#dde8f6]">759명</td><td class="border border-[#eee]">1,698명</td></tr>
    </tbody>
  </table>

  <!-- highlight frames -->
  <div class="absolute z-30 left-[636px] top-[406px] w-[569px] h-[34px] border-[3px] border-[#f0695c]"></div>
  <div class="absolute z-30 left-[636px] top-[438px] w-[569px] h-[31px] border-[3px] border-[#fdb900]"></div>
  <div class="absolute z-30 left-[636px] top-[467px] w-[569px] h-[64px] border-[3px] border-[#5fc08f]"></div>

  <!-- legend overlay -->
  <div class="absolute z-40 left-[636px] top-[405px] w-[119px] flex flex-col gap-[2px] text-[#f2f2f2] text-[17.5px] tracking-[-1.5px] whitespace-nowrap">
    <div class="h-[33px] pl-[21px] flex items-center bg-[#403e3e]">90%이상 : 1</div>
    <div class="h-[30px] pl-[21px] flex items-center bg-[#403e3e]">85%이상 : 1</div>
    <div class="h-[34px] pl-[21px] flex items-center bg-[#403e3e]">75%이상 : 2</div>
  </div>
</div>
</body>
</html>
